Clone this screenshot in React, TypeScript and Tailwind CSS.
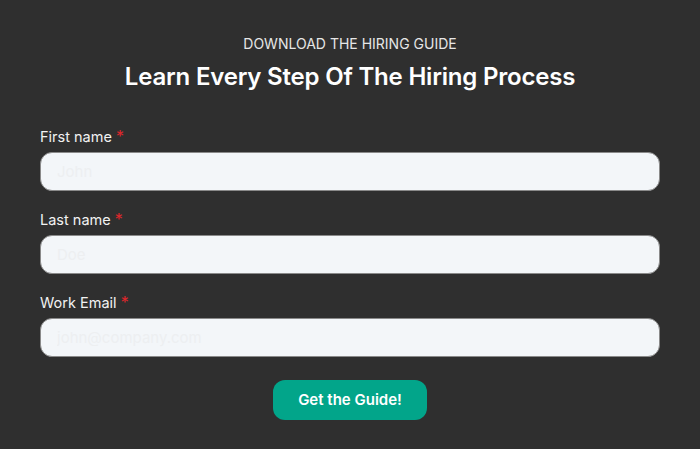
import React from 'react';

const fields = [
  { label: 'First name', placeholder: 'John', type: 'text' },
  { label: 'Last name', placeholder: 'Doe', type: 'text' },
  { label: 'Work Email', placeholder: 'john@company.com', type: 'email' },
];

export default function App() {
  return (
    <div className="w-[700px] h-[449px] bg-[#2f2f2f] font-['Inter',sans-serif] text-white px-10 pt-[34px]">
      <p className="text-center text-[14px] leading-5 text-[#e6e6e6]">DOWNLOAD THE HIRING GUIDE</p>
      <h1 className="mt-[7px] text-center text-[24px] leading-8 font-semibold tracking-[-0.2px]">
        Learn Every Step Of The Hiring Process
      </h1>
      <form className="mt-[34px] flex flex-col gap-[19px]">
        {fields.map((f) => (
          <div key={f.label} className="flex flex-col gap-[5px]">
            <label className="h-5 text-[14.5px] leading-5 text-[#f2f2f2]">
              {f.label} <span className="text-[16px] leading-none text-[#e0262b]">*</span>
            </label>
            <input
              type={f.type}
              placeholder={f.placeholder}
              className="h-[39px] w-full rounded-[12px] border border-[#8a8a8a] bg-[#f3f6f9] px-4 text-[15px] text-gray-800 placeholder:text-[#edeff1] outline-none"
            />
          </div>
        ))}
        <div className="flex justify-center mt-[4px]">
          <button
            type="button"
            className="h-10 w-[154px] rounded-[12px] bg-[#02a58a] text-[15px] font-semibold text-white"
          >
            Get the Guide!
          </button>
        </div>
      </form>
    </div>
  );
}
